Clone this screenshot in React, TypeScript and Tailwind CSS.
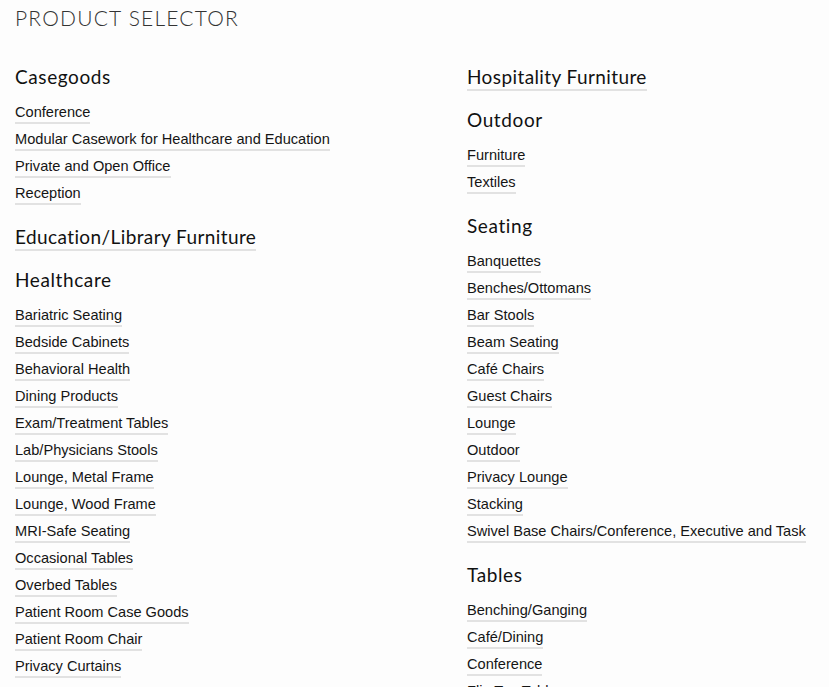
import React from 'react';

type Section = { title: string; items?: string[] };

const LEFT: Section[] = [
  {
    title: 'Casegoods',
    items: ['Conference', 'Modular Casework for Healthcare and Education', 'Private and Open Office', 'Reception'],
  },
  { title: 'Education/Library Furniture' },
  {
    title: 'Healthcare',
    items: [
      'Bariatric Seating',
      'Bedside Cabinets',
      'Behavioral Health',
      'Dining Products',
      'Exam/Treatment Tables',
      'Lab/Physicians Stools',
      'Lounge, Metal Frame',
      'Lounge, Wood Frame',
      'MRI-Safe Seating',
      'Occasional Tables',
      'Overbed Tables',
      'Patient Room Case Goods',
      'Patient Room Chair',
      'Privacy Curtains',
      'Recliners',
      'Sleepers',
    ],
  },
];

const RIGHT: Section[] = [
  { title: 'Hospitality Furniture' },
  { title: 'Outdoor', items: ['Furniture', 'Textiles'] },
  {
    title: 'Seating',
    items: [
      'Banquettes',
      'Benches/Ottomans',
      'Bar Stools',
      'Beam Seating',
      'Café Chairs',
      'Guest Chairs',
      'Lounge',
      'Outdoor',
      'Privacy Lounge',
      'Stacking',
      'Swivel Base Chairs/Conference, Executive and Task',
    ],
  },
  {
    title: 'Tables',
    items: ['Benching/Ganging', 'Café/Dining', 'Conference', 'Flip Top Tables', 'Occasional', 'Training'],
  },
];

const headingFont = { fontFamily: 'Lato, "Noto Sans", sans-serif' };

const SectionBlock: React.FC<{ section: Section }> = ({ section }) => {
  if (!section.items) {
    return (
      <div className="mb-[17px] flex">
        <a
          href="#"
          className="text-[19px] leading-[24px] tracking-[0.4px] text-[#111] border-b-2 border-[#e2e2e2]"
        >
          {section.title}
        </a>
      </div>
    );
  }
  return (
    <div className="mb-[20px]">
      <h2 className="text-[19px] leading-[24px] tracking-[0.6px] text-[#111] mb-[14px]">{section.title}</h2>
      <ul className="flex flex-col gap-[6px]">
        {section.items.map((item) => (
          <li key={item} className="flex">
            <a
              href="#"
              className="whitespace-nowrap text-[14.6px] leading-[19px] text-[#151515] border-b-2 border-[#e2e2e2]"
              style={{ fontFamily: '"Liberation Sans", Arial, sans-serif' }}
            >
              {item}
            </a>
          </li>
        ))}
      </ul>
    </div>
  );
};

const App: React.FC = () => {
  return (
    <div className="min-h-screen bg-[#fdfdfd] px-[15px] pt-[3px]" style={headingFont}>
      <h1 className="text-[21px] leading-[30px] font-light tracking-[1.2px] text-[#333] mb-[32px]">
        PRODUCT SELECTOR
      </h1>
      <div className="grid grid-cols-[452px_1fr]">
        <div className="flex flex-col">
          {LEFT.map((s) => (
            <SectionBlock key={s.title} section={s} />
          ))}
        </div>
        <div className="flex flex-col">
          {RIGHT.map((s) => (
            <SectionBlock key={s.title} section={s} />
          ))}
        </div>
      </div>
    </div>
  );
};

export default App;
